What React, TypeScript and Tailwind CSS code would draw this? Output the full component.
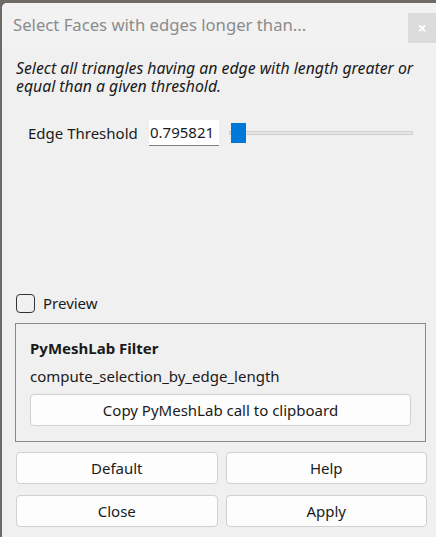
import React from "react";

const font = { fontFamily: "'Segoe UI', 'Noto Sans', sans-serif" };

function Btn({ children, className = "" }: { children: React.ReactNode; className?: string }) {
  return (
    <div
      className={
        "flex items-center justify-center h-[32px] bg-[#fdfdfd] border border-[#d0d0d0] rounded-[4px] text-[15px] text-[#1a1a1a] " +
        className
      }
    >
      {children}
    </div>
  );
}

export default function App() {
  return (
    <div className="w-[436px] h-[537px] bg-[#6e6a66] overflow-hidden" style={font}>
      <div className="ml-[2px] mt-[3px] h-[534px] bg-[#f0f0f0] rounded-tl-[5px] flex flex-col">
        <div className="h-[44px] bg-[#f2f2f2] rounded-tl-[5px] flex items-center justify-between">
          <div className="pl-[11px] text-[16.7px] text-[#8c8c8c] leading-none">Select Faces with edges longer than...</div>
          <div className="w-[28px] h-[30px] mt-[6px] bg-[#dcdcdc] flex items-center justify-center text-white text-[16px] font-bold leading-none">
            ×
          </div>
        </div>
        <div className="pl-[14px] pt-[12px] text-[15.8px] italic leading-[18px] text-[#1a1a1a]">
          <div className="h-[18px]">Select all triangles having an edge with length greater or</div>
          <div className="h-[18px]">equal than a given threshold.</div>
        </div>
        <div className="flex items-center mt-[25px] h-[26px]">
          <div className="pl-[26px] w-[147px] text-[15px] text-[#1a1a1a]">Edge Threshold</div>
          <div className="w-[70px] h-[26px] bg-white border-b border-[#808080] flex items-center pl-[1px] text-[15px] text-[#1a1a1a]">
            0.795821
          </div>
          <div className="relative ml-[10px] w-[184px] h-[20px] flex items-center">
            <div className="w-full h-[4px] bg-[#e5e5e5] border border-[#d0d0d0]" />
            <div className="absolute left-[2px] top-0 w-[15px] h-[20px] bg-[#0078d7]" />
          </div>
        </div>
        <div className="flex-1" />
        <div className="flex items-center pl-[14px] h-[20px] mb-[10px]">
          <div className="w-[19px] h-[19px] rounded-[4px] border border-[#333333] bg-[#f0f0f0]" />
          <div className="ml-[8px] text-[15px] text-[#1a1a1a]">Preview</div>
        </div>
        <div className="ml-[13px] mr-[10px] mb-[10px] border border-[#8a8a8a] h-[119px] flex flex-col px-[14px]">
          <div className="mt-[14px] font-bold text-[15px] text-[#1a1a1a] leading-[20px]">PyMeshLab Filter</div>
          <div className="mt-[8px] text-[15px] text-[#1a1a1a] leading-[20px]">compute_selection_by_edge_length</div>
          <Btn className="mt-[8px]">Copy PyMeshLab call to clipboard</Btn>
        </div>
        <div className="grid grid-cols-2 gap-x-[8px] gap-y-[11px] pl-[14px] pb-[10px] pr-[9px]">
          <Btn>Default</Btn>
          <Btn>Help</Btn>
          <Btn>Close</Btn>
          <Btn>Apply</Btn>
        </div>
      </div>
    </div>
  );
}
